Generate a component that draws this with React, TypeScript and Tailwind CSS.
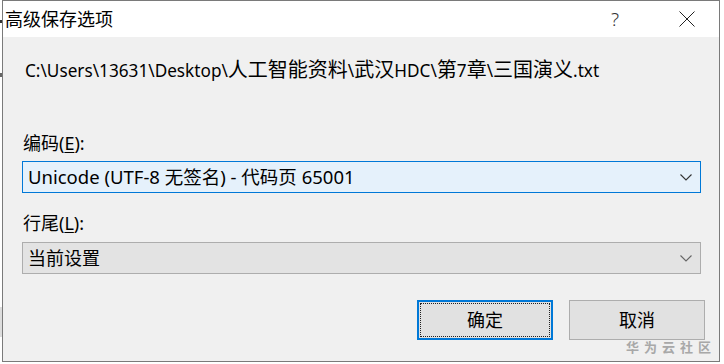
import React from "react";

const FONT = '"Noto Sans", "Noto Sans CJK SC", sans-serif';

function Chevron({ color }: { color: string }) {
  return (
    <svg width="12" height="7" viewBox="0 0 12 7" className="shrink-0">
      <path d="M0.5 0.5 L6 6 L11.5 0.5" fill="none" stroke={color} strokeWidth="1.1" />
    </svg>
  );
}

function L({ children }: { children: React.ReactNode }) {
  return <span className="text-[17.2px]">{children}</span>;
}

export default function App() {
  return (
    <div
      className="w-[724px] h-[364px] overflow-hidden bg-white flex relative text-[#000]"
      style={{ fontFamily: FONT }}
    >
      {/* background strip on the left */}
      <div className="w-[2px] h-full bg-white flex flex-col">
        <div className="h-[20px]" />
        <div className="h-[3px] bg-[#333]" />
        <div className="h-[50px]" />
        <div className="h-[4px] bg-[#666]" />
        <div className="h-[230px]" />
        <div className="h-[30px] bg-[#ddd]" />
      </div>

      {/* dialog window */}
      <div className="w-[718px] h-[362px] border border-[#7a7a7a] flex flex-col">
        {/* title bar */}
        <div className="h-[36px] bg-white flex items-center shrink-0">
          <span className="pl-[2px] text-[18px] leading-[24px] text-[#000]">高级保存选项</span>
          <div className="flex-1" />
          <span className="text-[19px] leading-[24px] text-[#333] mr-[60px] font-light">?</span>
          <svg width="16" height="16" viewBox="0 0 16 16" className="mr-[24px]">
            <path d="M0.5 0.5 L15.5 15.5 M15.5 0.5 L0.5 15.5" stroke="#222" strokeWidth="1" fill="none" />
          </svg>
        </div>

        {/* body */}
        <div className="flex-1 bg-[#f0f0f0] flex flex-col pl-[19px] relative">
          <div className="pt-[21px] pl-[3px] text-[20px] leading-[24px] whitespace-nowrap">
            <L>C:\Users\13631\Desktop\</L>人工智能资料<L>\</L>武汉<L>HDC\</L>第<L>7</L>章<L>\</L>三国演义<L>.txt</L>
          </div>

          <div className="mt-[48px] pl-[1px] text-[18px] leading-[24px]">
            编码(<span className="underline underline-offset-2">E</span>):
          </div>
          <div className="mt-[6px] w-[679px] h-[32px] border border-[#0078d7] bg-[#e5f1fb] flex items-center pl-[5px] pr-[8px]">
            <span className="flex-1 text-[18.5px] leading-[24px] whitespace-nowrap">
              Unicode (UTF-8 无签名) - 代码页 65001
            </span>
            <Chevron color="#333" />
          </div>

          <div className="mt-[18px] pl-[1px] text-[18px] leading-[24px]">
            行尾(<span className="underline underline-offset-2">L</span>):
          </div>
          <div className="mt-[7px] w-[679px] h-[32px] border border-[#adadad] bg-[#e3e3e3] flex items-center pl-[5px] pr-[8px]">
            <span className="flex-1 text-[18px] leading-[24px]">当前设置</span>
            <Chevron color="#666" />
          </div>

          <div className="mt-[26px] flex justify-end pr-[14px] gap-[16px]">
            <div className="w-[136px] h-[40px] border-2 border-[#0078d7] bg-[#e1e1e1] p-[1px]">
              <div className="w-full h-full border border-dotted border-[#222] flex items-center justify-center text-[18px] leading-[24px]">
                确定
              </div>
            </div>
            <div className="w-[136px] h-[40px] border border-[#adadad] bg-[#e1e1e1] flex items-center justify-center text-[18px] leading-[24px]">
              取消
            </div>
          </div>

          {/* watermark */}
          <div className="absolute right-[3px] bottom-[6px] text-[13px] leading-[16px] tracking-[5px] font-bold text-[#a8a8a8]">
            华为云社区
          </div>
        </div>
      </div>
    </div>
  );
}
